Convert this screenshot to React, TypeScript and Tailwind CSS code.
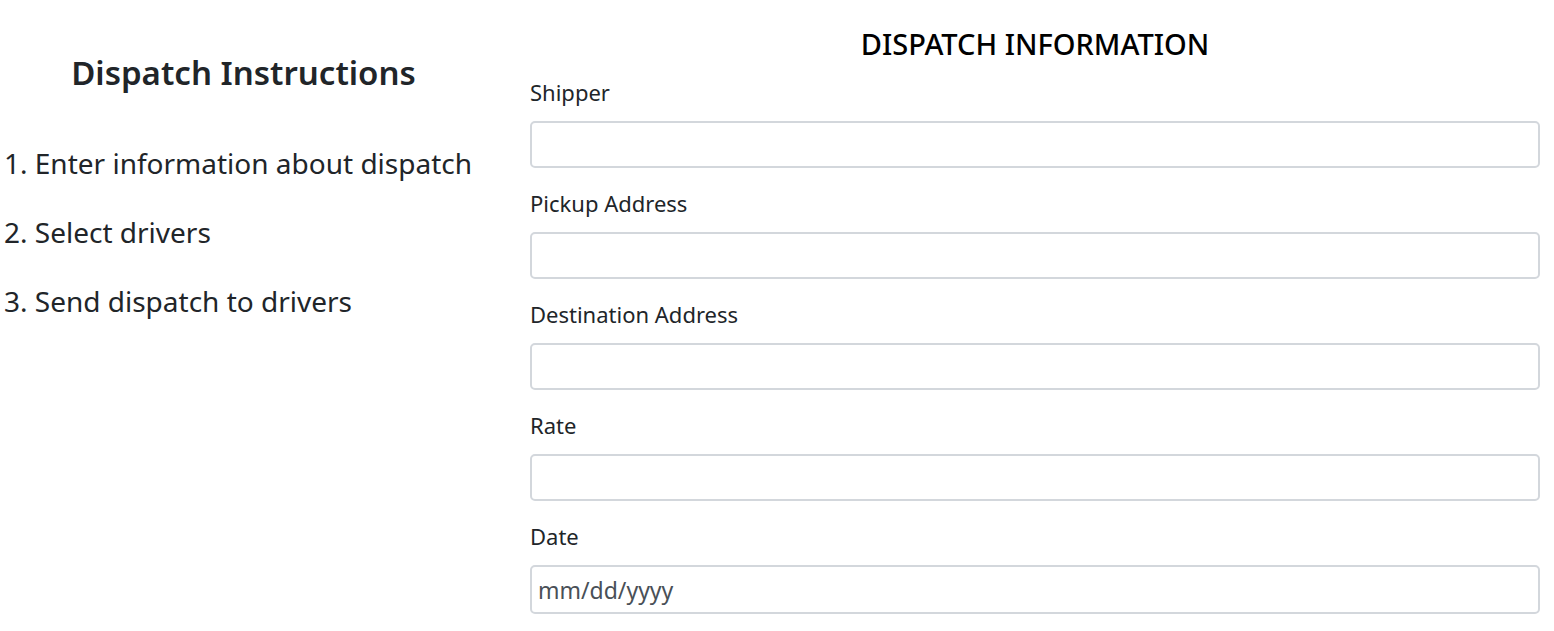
import React from "react";

const fields = ["Shipper", "Pickup Address", "Destination Address", "Rate"];

export default function App() {
  return (
    <div
      className="flex w-[1554px] h-[631px] bg-white text-[#212529] overflow-hidden"
      style={{ fontFamily: '"Noto Sans", "Open Sans", sans-serif' }}
    >
      <div className="w-[487px] shrink-0 pt-[52px]">
        <h3 className="text-center text-[33px] leading-[42px] font-semibold">
          Dispatch Instructions
        </h3>
        <div className="mt-[47px] flex flex-col gap-[24px] pl-[4px] text-[28px] leading-[45px]">
          <div>1. Enter information about dispatch</div>
          <div>2. Select drivers</div>
          <div>3. Send dispatch to drivers</div>
        </div>
      </div>
      <div className="ml-[43px] w-[1010px] pt-[26px]">
        <h4 className="text-center text-[29px] leading-[36px] font-medium text-black">
          DISPATCH INFORMATION
        </h4>
        <div className="mt-[15px] flex flex-col">
          {fields.map((f) => (
            <div key={f} className="mb-[20px]">
              <label className="block text-[22px] leading-[30px] mb-[14px]">{f}</label>
              <input
                type="text"
                className="block w-full h-[47px] border-2 border-[#d3d7dc] rounded-[5px] px-[8px] bg-white"
              />
            </div>
          ))}
          <div>
            <label className="block text-[22px] leading-[30px] mb-[14px]">Date</label>
            <input
              type="text"
              placeholder="mm/dd/yyyy"
              className="block w-full h-[49px] border-2 border-[#d3d7dc] rounded-[5px] px-[6px] bg-white text-[23px] text-[#495057] placeholder:text-[#495057]"
            />
          </div>
        </div>
      </div>
    </div>
  );
}
